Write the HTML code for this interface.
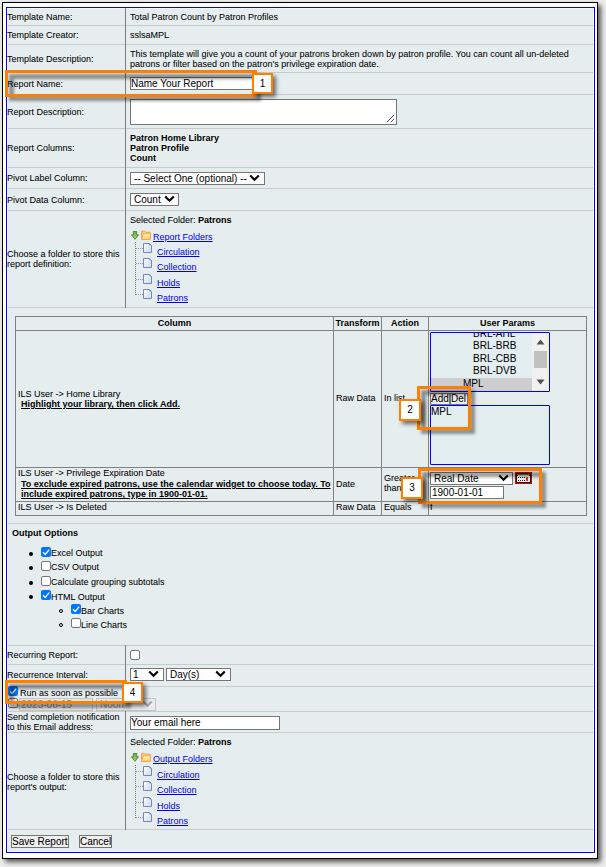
<!DOCTYPE html>
<html><head><meta charset="utf-8"><style>
html,body{margin:0;padding:0;}
body{width:606px;height:867px;background:#eeeeee;position:relative;overflow:hidden;font-family:"Liberation Sans",sans-serif;font-size:9px;line-height:10px;color:#000;}
.t{position:absolute;white-space:nowrap;line-height:10px;-webkit-text-stroke:0.2px rgba(0,0,0,.25);}
.r{position:absolute;box-sizing:border-box;}
.ob{position:absolute;box-sizing:border-box;border:3px solid #ff7f00;}
.obs{position:absolute;box-sizing:border-box;border:5px solid rgba(0,0,0,.4);filter:blur(1.5px);}
.lb{position:absolute;box-sizing:border-box;width:22px;height:22px;border:2px solid #ff7f00;background:#fff;font-size:10px;line-height:18px;text-align:center;}
.lbs{position:absolute;width:22px;height:22px;background:rgba(0,0,0,.55);filter:blur(2px);}
</style></head><body>
<div class="r" style="left:2px;top:2px;width:596px;height:857px;background:#fff;border:1px solid #000;box-shadow:3px 3px 5px rgba(0,0,0,.65);"></div>
<div class="r" style="left:6px;top:7px;width:589px;height:846px;background:#e6edef;border:1px solid #0000ff;"></div>
<div class="r" style="left:7px;top:8px;width:587px;height:844px;border:1px solid #f6f9f1;"></div>
<div class="r" style="left:8px;top:25px;width:585px;height:1px;background:#c9cbca;"></div>
<div class="r" style="left:8px;top:44px;width:585px;height:1px;background:#c9cbca;"></div>
<div class="r" style="left:8px;top:72px;width:585px;height:1px;background:#c9cbca;"></div>
<div class="r" style="left:8px;top:94px;width:585px;height:1px;background:#c9cbca;"></div>
<div class="r" style="left:8px;top:128px;width:585px;height:1px;background:#c9cbca;"></div>
<div class="r" style="left:8px;top:167px;width:585px;height:1px;background:#c9cbca;"></div>
<div class="r" style="left:8px;top:188px;width:585px;height:1px;background:#c9cbca;"></div>
<div class="r" style="left:8px;top:210px;width:585px;height:1px;background:#c9cbca;"></div>
<div class="r" style="left:8px;top:307px;width:585px;height:1px;background:#c9cbca;"></div>
<div class="r" style="left:8px;top:523px;width:585px;height:1px;background:#c9cbca;"></div>
<div class="r" style="left:8px;top:645px;width:585px;height:1px;background:#c9cbca;"></div>
<div class="r" style="left:8px;top:664px;width:585px;height:1px;background:#c9cbca;"></div>
<div class="r" style="left:8px;top:686px;width:585px;height:1px;background:#c9cbca;"></div>
<div class="r" style="left:8px;top:711px;width:585px;height:1px;background:#c9cbca;"></div>
<div class="r" style="left:8px;top:732px;width:585px;height:1px;background:#c9cbca;"></div>
<div class="r" style="left:8px;top:829px;width:585px;height:1px;background:#c9cbca;"></div>
<div class="r" style="left:125px;top:8px;width:1px;height:300px;background:#7d7d7d;"></div>
<div class="r" style="left:125px;top:645px;width:1px;height:42px;background:#7d7d7d;"></div>
<div class="r" style="left:125px;top:711px;width:1px;height:119px;background:#7d7d7d;"></div>
<div class="t" style="left:7px;top:12px;">Template Name:</div>
<div class="t" style="left:7px;top:30px;">Template Creator:</div>
<div class="t" style="left:7px;top:54px;">Template Description:</div>
<div class="t" style="left:7px;top:79px;">Report Name:</div>
<div class="t" style="left:7px;top:107px;">Report Description:</div>
<div class="t" style="left:7px;top:143px;">Report Columns:</div>
<div class="t" style="left:7px;top:173px;">Pivot Label Column:</div>
<div class="t" style="left:7px;top:195px;">Pivot Data Column:</div>
<div class="t" style="left:7px;top:249px;">Choose a folder to store this<br>report definition:</div>
<div class="t" style="left:7px;top:650px;">Recurring Report:</div>
<div class="t" style="left:7px;top:670px;">Recurrence Interval:</div>
<div class="t" style="left:7px;top:712px;">Send completion notification<br>to this Email address:</div>
<div class="t" style="left:7px;top:772px;">Choose a folder to store this<br>report's output:</div>
<div class="t" style="left:130px;top:12px;">Total Patron Count by Patron Profiles</div>
<div class="t" style="left:130px;top:30px;">sslsaMPL</div>
<div class="t" style="left:130px;top:49px;">This template will give you a count of your patrons broken down by patron profile. You can count all un-deleted<br>patrons or filter based on the patron's privilege expiration date.</div>
<div class="r" style="left:130px;top:77px;width:136px;height:13px;background:#fff;border:1px solid #767676;"></div>
<div class="t" style="left:131px;top:79px;font-size:10px;color:#000;-webkit-text-stroke-color:transparent;">Name Your Report</div>
<div class="r" style="left:130px;top:99px;width:267px;height:26px;background:#fff;border:1px solid #767676;"></div>
<svg class="r" style="left:386px;top:114px" width="9" height="9" viewBox="0 0 9 9"><path d="M1 8 L8 1 M5 8 L8 5" stroke="#555" stroke-width="1"/></svg>
<div class="t" style="left:130px;top:133px;font-weight:bold;-webkit-text-stroke-color:transparent;">Patron Home Library<br>Patron Profile<br>Count</div>
<div class="r" style="left:130px;top:172px;width:135px;height:13px;background:#fff;border:1px solid #767676;"></div>
<div class="t" style="left:134px;top:174px;font-size:10px;color:#000;-webkit-text-stroke-color:transparent;">-- Select One (optional) --</div>
<div class="r" style="left:249px;top:174px"><svg width="11" height="8" viewBox="0 0 11 8"><path d="M1.2 1.5 L5.5 5.8 L9.8 1.5" fill="none" stroke="#000" stroke-width="2.1"/></svg></div>
<div class="r" style="left:130px;top:193px;width:49px;height:13px;background:#fff;border:1px solid #767676;"></div>
<div class="t" style="left:134px;top:195px;font-size:10px;color:#000;-webkit-text-stroke-color:transparent;">Count</div>
<div class="r" style="left:164px;top:195px"><svg width="11" height="8" viewBox="0 0 11 8"><path d="M1.2 1.5 L5.5 5.8 L9.8 1.5" fill="none" stroke="#000" stroke-width="2.1"/></svg></div>
<div class="t" style="left:130px;top:215px;">Selected Folder: <b>Patrons</b></div>
<svg class="r" style="left:131px;top:231px" width="8" height="9" viewBox="0 0 8 9"><defs><linearGradient id="g215" x1="0" y1="0" x2="0" y2="1"><stop offset="0" stop-color="#6aa53c"/><stop offset="1" stop-color="#a8d47a"/></linearGradient></defs><path d="M2.3 0.5 H5.7 V3.8 H7.6 L4 8.3 L0.4 3.8 H2.3 Z" fill="url(#g215)" stroke="#4d8a2c" stroke-width="0.9" stroke-linejoin="round"/></svg>
<svg class="r" style="left:141px;top:230px" width="10" height="10" viewBox="0 0 10 10"><defs><linearGradient id="f215" x1="0" y1="0" x2="0" y2="1"><stop offset="0" stop-color="#fff3b0"/><stop offset="1" stop-color="#ffd860"/></linearGradient></defs><path d="M0.6 1.2 H3.6 L4.6 2.2 H9.2 V9.4 H0.6 Z" fill="#ffcf80" stroke="#f59a50" stroke-width="1"/><path d="M2 3.8 H9.5 L8.8 9.4 H0.8 Z" fill="url(#f215)" stroke="#f7a060" stroke-width="0.9"/></svg>
<div class="t" style="left:153px;top:232px;color:#0000ee;-webkit-text-stroke-color:transparent;text-decoration:underline;text-decoration-color:#0000ee;">Report Folders</div>
<div class="r" style="left:135px;top:242px;width:0;height:53px;border-left:1px dotted #7a7a7a"></div>
<div class="r" style="left:136px;top:248px;width:7px;height:0;border-top:1px dotted #999"></div>
<svg class="r" style="left:143px;top:243px" width="10" height="11" viewBox="0 0 10 11"><defs><linearGradient id="d215_0" x1="0" y1="0" x2="1" y2="1"><stop offset="0" stop-color="#ffffff"/><stop offset="1" stop-color="#c4daf6"/></linearGradient></defs><path d="M0.5 0.5 H6.5 L8.5 2.5 V9.5 H0.5 Z" fill="url(#d215_0)" stroke="#7a86b8" stroke-width="1"/><path d="M6.5 0.5 L8.5 2.5 H6.5 Z" fill="#4f86e0"/></svg>
<div class="r" style="left:136px;top:263px;width:7px;height:0;border-top:1px dotted #999"></div>
<svg class="r" style="left:143px;top:258px" width="10" height="11" viewBox="0 0 10 11"><defs><linearGradient id="d215_1" x1="0" y1="0" x2="1" y2="1"><stop offset="0" stop-color="#ffffff"/><stop offset="1" stop-color="#c4daf6"/></linearGradient></defs><path d="M0.5 0.5 H6.5 L8.5 2.5 V9.5 H0.5 Z" fill="url(#d215_1)" stroke="#7a86b8" stroke-width="1"/><path d="M6.5 0.5 L8.5 2.5 H6.5 Z" fill="#4f86e0"/></svg>
<div class="r" style="left:136px;top:279px;width:7px;height:0;border-top:1px dotted #999"></div>
<svg class="r" style="left:143px;top:274px" width="10" height="11" viewBox="0 0 10 11"><defs><linearGradient id="d215_2" x1="0" y1="0" x2="1" y2="1"><stop offset="0" stop-color="#ffffff"/><stop offset="1" stop-color="#c4daf6"/></linearGradient></defs><path d="M0.5 0.5 H6.5 L8.5 2.5 V9.5 H0.5 Z" fill="url(#d215_2)" stroke="#7a86b8" stroke-width="1"/><path d="M6.5 0.5 L8.5 2.5 H6.5 Z" fill="#4f86e0"/></svg>
<div class="r" style="left:136px;top:294px;width:7px;height:0;border-top:1px dotted #999"></div>
<svg class="r" style="left:143px;top:289px" width="10" height="11" viewBox="0 0 10 11"><defs><linearGradient id="d215_3" x1="0" y1="0" x2="1" y2="1"><stop offset="0" stop-color="#ffffff"/><stop offset="1" stop-color="#c4daf6"/></linearGradient></defs><path d="M0.5 0.5 H6.5 L8.5 2.5 V9.5 H0.5 Z" fill="url(#d215_3)" stroke="#7a86b8" stroke-width="1"/><path d="M6.5 0.5 L8.5 2.5 H6.5 Z" fill="#4f86e0"/></svg>
<div class="t" style="left:157px;top:247px;color:#0000ee;-webkit-text-stroke-color:transparent;text-decoration:underline;text-decoration-color:#0000ee;">Circulation</div>
<div class="t" style="left:157px;top:262px;color:#0000ee;-webkit-text-stroke-color:transparent;text-decoration:underline;text-decoration-color:#0000ee;">Collection</div>
<div class="t" style="left:157px;top:278px;color:#0000ee;-webkit-text-stroke-color:transparent;text-decoration:underline;text-decoration-color:#0000ee;">Holds</div>
<div class="t" style="left:157px;top:293px;color:#0000ee;-webkit-text-stroke-color:transparent;text-decoration:underline;text-decoration-color:#0000ee;">Patrons</div>
<div class="r" style="left:15px;top:316px;width:572px;height:200px;border:1px solid #808080;"></div>
<div class="r" style="left:15px;top:330px;width:572px;height:1px;background:#808080;"></div>
<div class="r" style="left:15px;top:467px;width:572px;height:1px;background:#808080;"></div>
<div class="r" style="left:15px;top:501px;width:572px;height:1px;background:#808080;"></div>
<div class="r" style="left:333px;top:316px;width:1px;height:200px;background:#808080;"></div>
<div class="r" style="left:381px;top:316px;width:1px;height:200px;background:#808080;"></div>
<div class="r" style="left:428px;top:316px;width:1px;height:200px;background:#808080;"></div>
<div class="t" style="left:16px;width:317px;top:318px;text-align:center;font-weight:bold;-webkit-text-stroke-color:transparent">Column</div>
<div class="t" style="left:334px;width:47px;top:318px;text-align:center;font-weight:bold;-webkit-text-stroke-color:transparent">Transform</div>
<div class="t" style="left:382px;width:46px;top:318px;text-align:center;font-weight:bold;-webkit-text-stroke-color:transparent">Action</div>
<div class="t" style="left:429px;width:157px;top:318px;text-align:center;font-weight:bold;-webkit-text-stroke-color:transparent">User Params</div>
<div class="t" style="left:18px;top:389px;">ILS User -&gt; Home Library</div>
<div class="t" style="left:21px;top:399px;font-weight:bold;-webkit-text-stroke-color:transparent;text-decoration:underline;text-decoration-color:#000;">Highlight your library, then click Add.</div>
<div class="t" style="left:336px;top:393px;">Raw Data</div>
<div class="t" style="left:384px;top:393px;">In list</div>
<div class="r" style="left:430px;top:332px;width:120px;height:60px;background:#e3eef1;border:1px solid #0000ff;overflow:hidden;border-radius:1px;"></div>
<div class="r" style="left:431px;top:333px;width:102px;height:58px;overflow:hidden"><div class="t" style="font-size:10px;left:42px;top:-4px">BRL-AHL</div><div class="t" style="font-size:10px;left:42px;top:8px">BRL-BRB</div><div class="t" style="font-size:10px;left:42px;top:20.6px">BRL-CBB</div><div class="t" style="font-size:10px;left:42px;top:33.2px">BRL-DVB</div><div class="r" style="left:0;top:45px;width:101px;height:13px;background:#cecece"></div><div class="t" style="font-size:10px;left:32px;top:46px">MPL</div></div>
<div class="r" style="left:532px;top:333px;width:17px;height:58px;background:#f1f1f1;"></div>
<div class="r" style="left:534px;top:351px;width:13px;height:17px;background:#c1c1c1;"></div>
<svg class="r" style="left:536px;top:339px" width="9" height="6" viewBox="0 0 9 6"><path d="M0.5 5.5 L4.5 0.5 L8.5 5.5 Z" fill="#505050"/></svg>
<svg class="r" style="left:536px;top:379px" width="9" height="6" viewBox="0 0 9 6"><path d="M0.5 0.5 L4.5 5.5 L8.5 0.5 Z" fill="#505050"/></svg>
<div class="r" style="left:430px;top:393px;width:20px;height:12px;background:#efefef;border:1px solid #767676;"></div>
<div class="r" style="left:450px;top:393px;width:18px;height:12px;background:#efefef;border:1px solid #767676;"></div>
<div class="t" style="left:431px;top:394px;font-size:10px;">Add</div>
<div class="t" style="left:451px;top:394px;font-size:10px;">Del</div>
<div class="r" style="left:430px;top:405px;width:120px;height:60px;background:#e3eef1;border:1px solid #0000ff;border-radius:1px;"></div>
<div class="t" style="left:431px;top:407px;font-size:10px;">MPL</div>
<div class="t" style="left:18px;top:468px;">ILS User -&gt; Privilege Expiration Date</div>
<div class="t" style="left:21px;top:479px;font-weight:bold;-webkit-text-stroke-color:transparent;text-decoration:underline;text-decoration-color:#000;">To exclude expired patrons, use the calendar widget to choose today. To</div>
<div class="t" style="left:21px;top:489px;font-weight:bold;-webkit-text-stroke-color:transparent;text-decoration:underline;text-decoration-color:#000;">include expired patrons, type in 1900-01-01.</div>
<div class="t" style="left:336px;top:479px;">Date</div>
<div class="t" style="left:384px;top:473px;">Greater</div>
<div class="t" style="left:384px;top:483px;">than</div>
<div class="r" style="left:430px;top:472px;width:83px;height:13px;background:#fff;border:1px solid #767676;"></div>
<div class="t" style="left:434px;top:474px;font-size:10px;color:#000;-webkit-text-stroke-color:transparent;">Real Date</div>
<div class="r" style="left:498px;top:474px"><svg width="11" height="8" viewBox="0 0 11 8"><path d="M1.2 1.5 L5.5 5.8 L9.8 1.5" fill="none" stroke="#000" stroke-width="2.1"/></svg></div>
<svg class="r" style="left:515px;top:472px" width="17" height="12" viewBox="0 0 17 12" shape-rendering="crispEdges"><rect x="0" y="0" width="17" height="12" fill="#e00000"/><rect x="1" y="1" width="15" height="10" fill="#142414"/><rect x="2" y="2" width="13" height="1" fill="#5a8a5a"/><rect x="3" y="3" width="11" height="1" fill="#e2de9c"/><rect x="2" y="4" width="13" height="6" fill="#f2f2f2"/><path d="M3 5h1v1H3zM5 5h1v1H5zM7 5h1v1H7zM9 5h1v1H9zM3 8h1v1H3zM5 8h1v1H5zM7 8h1v1H7zM9 8h1v1H9z" fill="#222"/><rect x="11" y="5" width="2" height="4" fill="#ff2020"/></svg>
<div class="r" style="left:430px;top:486px;width:74px;height:13px;background:#fff;border:1px solid #767676;"></div>
<div class="t" style="left:432px;top:488px;font-size:10px;color:#000;-webkit-text-stroke-color:transparent;">1900-01-01</div>
<div class="t" style="left:18px;top:502px;">ILS User -&gt; Is Deleted</div>
<div class="t" style="left:336px;top:502px;">Raw Data</div>
<div class="t" style="left:384px;top:502px;">Equals</div>
<div class="t" style="left:430px;top:502px;">f</div>
<div class="t" style="left:12px;top:528px;font-weight:bold;-webkit-text-stroke-color:transparent;">Output Options</div>
<div class="r" style="left:28.5px;top:551.8px;width:4px;height:4px;border-radius:50%;background:#000"></div>
<svg class="r" style="left:41px;top:547px" width="10" height="10" viewBox="0 0 10 10"><rect x="0" y="0" width="10" height="10" rx="2" fill="#0075ff"/><path d="M2 5.2 L4.2 7.4 L8.2 2.6" fill="none" stroke="#fff" stroke-width="1.4"/></svg>
<div class="t" style="left:51px;top:548px;">Excel Output</div>
<div class="r" style="left:28.5px;top:565.8px;width:4px;height:4px;border-radius:50%;background:#000"></div>
<svg class="r" style="left:41px;top:561px" width="10" height="10" viewBox="0 0 10 10"><rect x="0.5" y="0.5" width="9" height="9" rx="1.5" fill="#fff" stroke="#767676"/></svg>
<div class="t" style="left:51px;top:562px;">CSV Output</div>
<div class="r" style="left:28.5px;top:580.8px;width:4px;height:4px;border-radius:50%;background:#000"></div>
<svg class="r" style="left:41px;top:576px" width="10" height="10" viewBox="0 0 10 10"><rect x="0.5" y="0.5" width="9" height="9" rx="1.5" fill="#fff" stroke="#767676"/></svg>
<div class="t" style="left:51px;top:577px;">Calculate grouping subtotals</div>
<div class="r" style="left:28.5px;top:594.8px;width:4px;height:4px;border-radius:50%;background:#000"></div>
<svg class="r" style="left:41px;top:590px" width="10" height="10" viewBox="0 0 10 10"><rect x="0" y="0" width="10" height="10" rx="2" fill="#0075ff"/><path d="M2 5.2 L4.2 7.4 L8.2 2.6" fill="none" stroke="#fff" stroke-width="1.4"/></svg>
<div class="t" style="left:51px;top:592px;">HTML Output</div>
<div class="r" style="left:58.7px;top:609.2px;width:4px;height:4px;border-radius:50%;border:1px solid #000;box-sizing:border-box"></div>
<svg class="r" style="left:71px;top:604px" width="10" height="10" viewBox="0 0 10 10"><rect x="0" y="0" width="10" height="10" rx="2" fill="#0075ff"/><path d="M2 5.2 L4.2 7.4 L8.2 2.6" fill="none" stroke="#fff" stroke-width="1.4"/></svg>
<div class="t" style="left:81px;top:606px;">Bar Charts</div>
<div class="r" style="left:58.7px;top:623.2px;width:4px;height:4px;border-radius:50%;border:1px solid #000;box-sizing:border-box"></div>
<svg class="r" style="left:71px;top:618px" width="10" height="10" viewBox="0 0 10 10"><rect x="0.5" y="0.5" width="9" height="9" rx="1.5" fill="#fff" stroke="#767676"/></svg>
<div class="t" style="left:81px;top:620px;">Line Charts</div>
<svg class="r" style="left:130px;top:650px" width="10" height="10" viewBox="0 0 10 10"><rect x="0.5" y="0.5" width="9" height="9" rx="1.5" fill="#fff" stroke="#767676"/></svg>
<div class="r" style="left:130px;top:668px;width:34px;height:13px;background:#fff;border:1px solid #767676;"></div>
<div class="t" style="left:133px;top:670px;font-size:10px;color:#000;-webkit-text-stroke-color:transparent;">1</div>
<div class="r" style="left:148px;top:670px"><svg width="11" height="8" viewBox="0 0 11 8"><path d="M1.2 1.5 L5.5 5.8 L9.8 1.5" fill="none" stroke="#000" stroke-width="2.1"/></svg></div>
<div class="r" style="left:166px;top:668px;width:65px;height:13px;background:#fff;border:1px solid #767676;"></div>
<div class="t" style="left:170px;top:670px;font-size:10px;color:#000;-webkit-text-stroke-color:transparent;">Day(s)</div>
<div class="r" style="left:215px;top:670px"><svg width="11" height="8" viewBox="0 0 11 8"><path d="M1.2 1.5 L5.5 5.8 L9.8 1.5" fill="none" stroke="#000" stroke-width="2.1"/></svg></div>
<svg class="r" style="left:8px;top:686px" width="10" height="10" viewBox="0 0 10 10"><rect x="0" y="0" width="10" height="10" rx="2" fill="#0075ff"/><path d="M2 5.2 L4.2 7.4 L8.2 2.6" fill="none" stroke="#fff" stroke-width="1.4"/></svg>
<div class="t" style="left:20px;top:688px;">Run as soon as possible</div>
<svg class="r" style="left:8px;top:698px" width="10" height="10" viewBox="0 0 10 10"><rect x="0.5" y="0.5" width="9" height="9" rx="1.5" fill="#fff" stroke="#767676"/></svg>
<div class="r" style="left:19px;top:698px;width:74px;height:13px;background:#e6e6e6;border:1px solid #c4c4c4;"></div>
<div class="t" style="left:21px;top:700px;font-size:10px;color:#888;-webkit-text-stroke-color:transparent;">2023-06-15</div>
<div class="r" style="left:96px;top:698px;width:60px;height:13px;background:#e9eced;border:1px solid #c4c4c4;"></div>
<div class="t" style="left:100px;top:700px;font-size:10px;color:#999;-webkit-text-stroke-color:transparent;">Noon</div>
<div class="r" style="left:142px;top:700px"><svg width="11" height="8" viewBox="0 0 11 8"><path d="M1.2 1.5 L5.5 5.8 L9.8 1.5" fill="none" stroke="#aaa" stroke-width="2.1"/></svg></div>
<div class="r" style="left:130px;top:716px;width:150px;height:14px;background:#fff;border:1px solid #767676;"></div>
<div class="t" style="left:131px;top:718px;font-size:10px;color:#000;-webkit-text-stroke-color:transparent;">Your email here</div>
<div class="t" style="left:130px;top:737px;">Selected Folder: <b>Patrons</b></div>
<svg class="r" style="left:131px;top:753px" width="8" height="9" viewBox="0 0 8 9"><defs><linearGradient id="g737" x1="0" y1="0" x2="0" y2="1"><stop offset="0" stop-color="#6aa53c"/><stop offset="1" stop-color="#a8d47a"/></linearGradient></defs><path d="M2.3 0.5 H5.7 V3.8 H7.6 L4 8.3 L0.4 3.8 H2.3 Z" fill="url(#g737)" stroke="#4d8a2c" stroke-width="0.9" stroke-linejoin="round"/></svg>
<svg class="r" style="left:141px;top:752px" width="10" height="10" viewBox="0 0 10 10"><defs><linearGradient id="f737" x1="0" y1="0" x2="0" y2="1"><stop offset="0" stop-color="#fff3b0"/><stop offset="1" stop-color="#ffd860"/></linearGradient></defs><path d="M0.6 1.2 H3.6 L4.6 2.2 H9.2 V9.4 H0.6 Z" fill="#ffcf80" stroke="#f59a50" stroke-width="1"/><path d="M2 3.8 H9.5 L8.8 9.4 H0.8 Z" fill="url(#f737)" stroke="#f7a060" stroke-width="0.9"/></svg>
<div class="t" style="left:153px;top:754px;color:#0000ee;-webkit-text-stroke-color:transparent;text-decoration:underline;text-decoration-color:#0000ee;">Output Folders</div>
<div class="r" style="left:135px;top:765px;width:0;height:53px;border-left:1px dotted #7a7a7a"></div>
<div class="r" style="left:136px;top:771px;width:7px;height:0;border-top:1px dotted #999"></div>
<svg class="r" style="left:143px;top:766px" width="10" height="11" viewBox="0 0 10 11"><defs><linearGradient id="d737_0" x1="0" y1="0" x2="1" y2="1"><stop offset="0" stop-color="#ffffff"/><stop offset="1" stop-color="#c4daf6"/></linearGradient></defs><path d="M0.5 0.5 H6.5 L8.5 2.5 V9.5 H0.5 Z" fill="url(#d737_0)" stroke="#7a86b8" stroke-width="1"/><path d="M6.5 0.5 L8.5 2.5 H6.5 Z" fill="#4f86e0"/></svg>
<div class="r" style="left:136px;top:786px;width:7px;height:0;border-top:1px dotted #999"></div>
<svg class="r" style="left:143px;top:781px" width="10" height="11" viewBox="0 0 10 11"><defs><linearGradient id="d737_1" x1="0" y1="0" x2="1" y2="1"><stop offset="0" stop-color="#ffffff"/><stop offset="1" stop-color="#c4daf6"/></linearGradient></defs><path d="M0.5 0.5 H6.5 L8.5 2.5 V9.5 H0.5 Z" fill="url(#d737_1)" stroke="#7a86b8" stroke-width="1"/><path d="M6.5 0.5 L8.5 2.5 H6.5 Z" fill="#4f86e0"/></svg>
<div class="r" style="left:136px;top:802px;width:7px;height:0;border-top:1px dotted #999"></div>
<svg class="r" style="left:143px;top:797px" width="10" height="11" viewBox="0 0 10 11"><defs><linearGradient id="d737_2" x1="0" y1="0" x2="1" y2="1"><stop offset="0" stop-color="#ffffff"/><stop offset="1" stop-color="#c4daf6"/></linearGradient></defs><path d="M0.5 0.5 H6.5 L8.5 2.5 V9.5 H0.5 Z" fill="url(#d737_2)" stroke="#7a86b8" stroke-width="1"/><path d="M6.5 0.5 L8.5 2.5 H6.5 Z" fill="#4f86e0"/></svg>
<div class="r" style="left:136px;top:817px;width:7px;height:0;border-top:1px dotted #999"></div>
<svg class="r" style="left:143px;top:812px" width="10" height="11" viewBox="0 0 10 11"><defs><linearGradient id="d737_3" x1="0" y1="0" x2="1" y2="1"><stop offset="0" stop-color="#ffffff"/><stop offset="1" stop-color="#c4daf6"/></linearGradient></defs><path d="M0.5 0.5 H6.5 L8.5 2.5 V9.5 H0.5 Z" fill="url(#d737_3)" stroke="#7a86b8" stroke-width="1"/><path d="M6.5 0.5 L8.5 2.5 H6.5 Z" fill="#4f86e0"/></svg>
<div class="t" style="left:157px;top:770px;color:#0000ee;-webkit-text-stroke-color:transparent;text-decoration:underline;text-decoration-color:#0000ee;">Circulation</div>
<div class="t" style="left:157px;top:785px;color:#0000ee;-webkit-text-stroke-color:transparent;text-decoration:underline;text-decoration-color:#0000ee;">Collection</div>
<div class="t" style="left:157px;top:801px;color:#0000ee;-webkit-text-stroke-color:transparent;text-decoration:underline;text-decoration-color:#0000ee;">Holds</div>
<div class="t" style="left:157px;top:816px;color:#0000ee;-webkit-text-stroke-color:transparent;text-decoration:underline;text-decoration-color:#0000ee;">Patrons</div>
<div class="r" style="left:11px;top:835px;width:58px;height:13px;background:#efefef;border:1px solid #767676;"></div>
<div class="t" style="left:12px;top:837px;font-size:10px;">Save Report</div>
<div class="r" style="left:79px;top:835px;width:33px;height:13px;background:#efefef;border:1px solid #767676;"></div>
<div class="t" style="left:80px;top:837px;font-size:10px;">Cancel</div>
<div class="obs" style="left:9px;top:74px;width:252px;height:27px;"></div>
<div class="ob" style="left:5px;top:70px;width:252px;height:27px;"></div>
<div class="lbs" style="left:255px;top:76px;width:21px;height:21px"></div>
<div class="lb" style="left:252px;top:73px;width:21px;height:21px;line-height:17px">1</div>
<div class="obs" style="left:421px;top:390px;width:54px;height:44px;"></div>
<div class="ob" style="left:417px;top:386px;width:54px;height:44px;"></div>
<div class="lbs" style="left:402px;top:402px;width:22px;height:22px"></div>
<div class="lb" style="left:399px;top:399px;width:22px;height:22px;line-height:18px">2</div>
<div class="obs" style="left:422px;top:472px;width:124px;height:36px;"></div>
<div class="ob" style="left:418px;top:468px;width:124px;height:36px;"></div>
<div class="lbs" style="left:404px;top:480px;width:22px;height:22px"></div>
<div class="lb" style="left:401px;top:477px;width:22px;height:22px;line-height:18px">3</div>
<div class="obs" style="left:9px;top:684px;width:122px;height:24px;"></div>
<div class="ob" style="left:5px;top:680px;width:122px;height:24px;"></div>
<div class="lbs" style="left:125px;top:685px;width:21px;height:21px"></div>
<div class="lb" style="left:122px;top:682px;width:21px;height:21px;line-height:17px">4</div>
</body></html>
